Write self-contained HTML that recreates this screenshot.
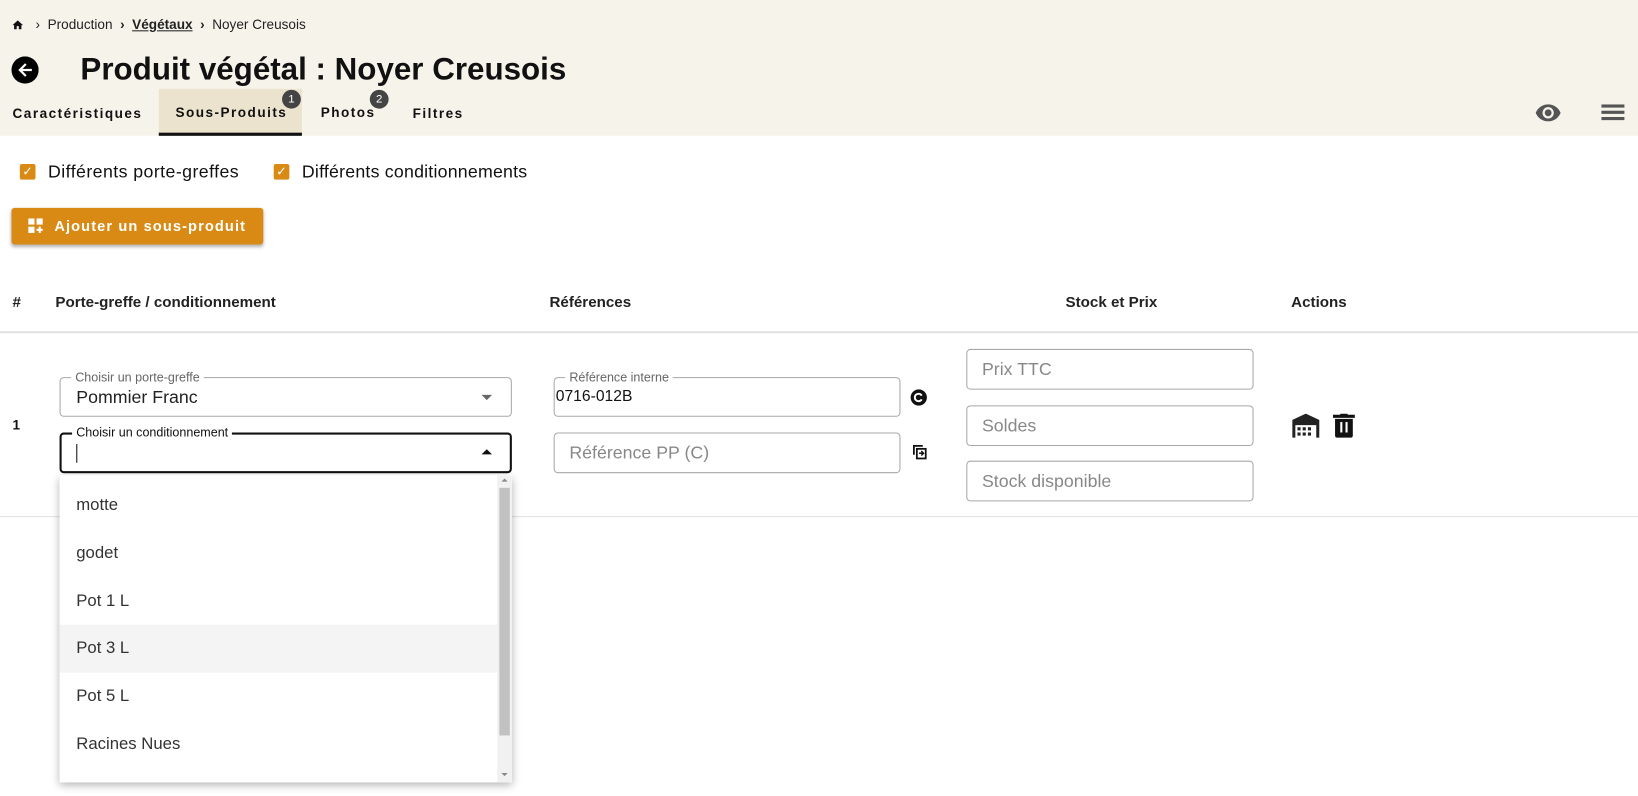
<!DOCTYPE html>
<html><head><meta charset="utf-8"><style>
*{box-sizing:border-box;margin:0;padding:0}
body{width:1638px;height:796px;background:#fff;font-family:"Liberation Sans",sans-serif;color:#111;position:relative;overflow:hidden}
#w{position:absolute;left:0;top:0;width:1568px;height:762px;transform:scale(1.04464);transform-origin:0 0}
.abs{position:absolute}
.hdr{position:absolute;left:0;top:0;width:1600px;height:130px;background:#f6f3eb}
.fs{position:absolute;border:1px solid #a8a8a8;border-radius:4px;background:#fff}
.lbl{position:absolute;top:-8px;left:10px;background:#fff;padding:0 4px;font-size:12px;color:#666}
.ph{position:absolute;left:14px;top:10px;font-size:17px;color:#888}
.opt{position:absolute;left:0;width:433px;height:46px;font-size:16px;color:#333;padding-left:16px;line-height:46px}
.tab{position:absolute;font-size:13px;font-weight:bold;letter-spacing:1.4px}
.th{position:absolute;top:282px;font-size:14.5px;font-weight:bold;color:#222}
</style></head><body><div id="w">
<div class="hdr"></div>
<svg class="abs" style="left:11px;top:18px" width="12" height="12" viewBox="0 0 24 24"><path d="M10 20v-6h4v6h5v-8h3L12 3 2 12h3v8z" fill="#111"/></svg>
<div class="abs" style="left:34px;top:16px;font-size:13px;color:#222">›&nbsp; Production &nbsp;<b>›</b>&nbsp; <b style="text-decoration:underline">Végétaux</b> &nbsp;<b>›</b>&nbsp; Noyer Creusois</div>
<svg class="abs" style="left:11px;top:54px" width="26" height="26" viewBox="0 0 24 24"><circle cx="12" cy="12" r="12" fill="#000"/><path d="M18 11H9.8l3.6-3.6L12 6l-6 6 6 6 1.4-1.4L9.8 13H18z" fill="#fff"/></svg>
<div class="abs" style="left:77px;top:50px;font-size:30px;font-weight:bold">Produit végétal : Noyer Creusois</div>
<div class="abs" style="left:152px;top:85px;width:137px;height:45px;background:#ece3cf;border-bottom:3px solid #111"></div>
<div class="tab" style="left:12px;top:101px">Caractéristiques</div>
<div class="tab" style="left:168px;top:100px">Sous-Produits</div>
<div class="tab" style="left:307px;top:100px">Photos</div>
<div class="tab" style="left:395px;top:101px">Filtres</div>
<div class="abs" style="left:270px;top:86px;width:18px;height:18px;border-radius:9px;background:#444;color:#fff;font-size:11px;text-align:center;line-height:18px">1</div>
<div class="abs" style="left:354px;top:86px;width:18px;height:18px;border-radius:9px;background:#444;color:#fff;font-size:11px;text-align:center;line-height:18px">2</div>
<svg class="abs" style="left:1467px;top:95px" width="30" height="26" viewBox="0 0 24 24"><path d="M12 4.5C7 4.5 2.7 7.6 1 12c1.7 4.4 6 7.5 11 7.5s9.3-3.1 11-7.5c-1.7-4.4-6-7.5-11-7.5zm0 12.5a5 5 0 110-10 5 5 0 010 10zm0-8a3 3 0 100 6 3 3 0 000-6z" fill="#555"/></svg>
<div class="abs" style="left:1533px;top:100px;width:22px;height:3px;background:#555;box-shadow:0 6px 0 #555,0 12px 0 #555"></div>
<div class="abs" style="left:19px;top:157px;width:15px;height:15px;background:#d98a14;border-radius:2px;color:#fff;font-size:12px;text-align:center;line-height:15px">✓</div>
<div class="abs" style="left:46px;top:155px;font-size:17px;letter-spacing:.4px">Différents porte-greffes</div>
<div class="abs" style="left:262px;top:157px;width:15px;height:15px;background:#d98a14;border-radius:2px;color:#fff;font-size:12px;text-align:center;line-height:15px">✓</div>
<div class="abs" style="left:289px;top:155px;font-size:17px;letter-spacing:.2px">Différents conditionnements</div>
<div class="abs" style="left:11px;top:199px;width:241px;height:35px;background:#d98a14;border-radius:3px;box-shadow:0 2px 3px rgba(0,0,0,.3)"></div>
<svg class="abs" style="left:27px;top:209px" width="14" height="14" viewBox="0 0 14 14"><rect x="0" y="0" width="6" height="6" fill="#fff"/><rect x="8" y="0" width="6" height="6" fill="#fff"/><rect x="0" y="8" width="6" height="6" fill="#fff"/><path d="M11 8v6M8 11h6" stroke="#fff" stroke-width="2"/></svg>
<div class="abs" style="left:52px;top:208px;font-size:14px;color:#fff;font-weight:bold;letter-spacing:1.05px">Ajouter un sous-produit</div>
<div class="th" style="left:12px">#</div>
<div class="th" style="left:53px">Porte-greffe / conditionnement</div>
<div class="th" style="left:526px">Références</div>
<div class="th" style="left:1020px">Stock et Prix</div>
<div class="th" style="left:1236px">Actions</div>
<div class="abs" style="left:0;top:317px;width:1600px;height:2px;background:#e2e2e2"></div>
<div class="abs" style="left:0;top:494px;width:1600px;height:1px;background:#e2e2e2"></div>
<div class="abs" style="left:12px;top:399px;font-size:13px;font-weight:bold">1</div>
<div class="fs" style="left:57px;top:361px;width:433px;height:38px"><span class="lbl">Choisir un porte-greffe</span><div class="abs" style="left:15px;top:9px;font-size:17px;color:#222">Pommier Franc</div><div class="abs" style="left:403px;top:16px;border:5px solid transparent;border-top-color:#666;border-bottom:0"></div></div>
<div class="fs" style="left:57px;top:414px;width:433px;height:39px;border:2px solid #111"><span class="lbl" style="color:#111;top:-9px">Choisir un conditionnement</span><div class="abs" style="left:14px;top:9px;width:1px;height:18px;background:#111"></div><div class="abs" style="left:402px;top:14px;border:5px solid transparent;border-bottom-color:#111;border-top:0"></div></div>
<div class="fs" style="left:530px;top:361px;width:332px;height:38px"><span class="lbl">Référence interne</span><div class="abs" style="left:1px;top:9px;font-size:15px;color:#111">0716-012B</div></div>
<div class="fs" style="left:530px;top:414px;width:332px;height:39px"><div class="ph" style="top:9px">Référence PP (C)</div></div>
<svg class="abs" style="left:871px;top:372px" width="17" height="17" viewBox="0 0 24 24"><circle cx="12" cy="12" r="11" fill="#111"/><path d="M16 9.5A5 5 0 1016 14.5" stroke="#fff" stroke-width="2.6" fill="none"/></svg>
<svg class="abs" style="left:872px;top:424px" width="17" height="17" viewBox="0 0 24 24"><path d="M4 16V4h12" stroke="#111" stroke-width="2.4" fill="none"/><rect x="8" y="8" width="12" height="13" stroke="#111" stroke-width="2.4" fill="none"/><path d="M11 14h6M14 11l3 3-3 3" stroke="#111" stroke-width="2" fill="none"/></svg>
<div class="fs" style="left:925px;top:334px;width:275px;height:39px"><div class="ph" style="top:9px">Prix TTC</div></div>
<div class="fs" style="left:925px;top:388px;width:275px;height:39px"><div class="ph" style="top:9px">Soldes</div></div>
<div class="fs" style="left:925px;top:441px;width:275px;height:39px"><div class="ph" style="top:9px">Stock disponible</div></div>
<svg class="abs" style="left:1237px;top:396px" width="26" height="23" viewBox="0 0 26 23"><path d="M13 0L0 6v17h3V11h20v12h3V6z" fill="#222"/><rect x="5" y="13" width="3" height="3" fill="#222"/><rect x="10" y="13" width="3" height="3" fill="#222"/><rect x="15" y="13" width="3" height="3" fill="#222"/><rect x="5" y="18" width="3" height="3" fill="#222"/><rect x="10" y="18" width="3" height="3" fill="#222"/><rect x="15" y="18" width="3" height="3" fill="#222"/></svg>
<svg class="abs" style="left:1276px;top:396px" width="21" height="23" viewBox="0 0 21 23"><rect x="0" y="1" width="21" height="3" fill="#111"/><rect x="7" y="0" width="7" height="2" fill="#111"/><path d="M2 5h17v16a2 2 0 01-2 2H4a2 2 0 01-2-2z" fill="#111"/><rect x="7" y="8" width="2" height="10" fill="#fff"/><rect x="12" y="8" width="2" height="10" fill="#fff"/></svg>
<div class="abs" style="left:57px;top:455px;width:433px;height:294px;background:#fff;box-shadow:0 3px 8px rgba(0,0,0,.3);overflow:hidden">
<div class="opt" style="top:6px">motte</div>
<div class="opt" style="top:52px">godet</div>
<div class="opt" style="top:98px">Pot 1 L</div>
<div class="opt" style="top:143px;background:#f4f4f4">Pot 3 L</div>
<div class="opt" style="top:189px">Pot 5 L</div>
<div class="opt" style="top:235px">Racines Nues</div>
<div class="abs" style="left:419px;top:0;width:14px;height:294px;background:#f1f1f1"></div>
<div class="abs" style="left:421px;top:12px;width:10px;height:237px;background:#c1c1c1"></div>
<div class="abs" style="left:423px;top:3px;border:3px solid transparent;border-bottom-color:#888;border-top:0"></div>
<div class="abs" style="left:423px;top:285px;border:3px solid transparent;border-top-color:#888;border-bottom:0"></div>
</div>
</div></body></html>
